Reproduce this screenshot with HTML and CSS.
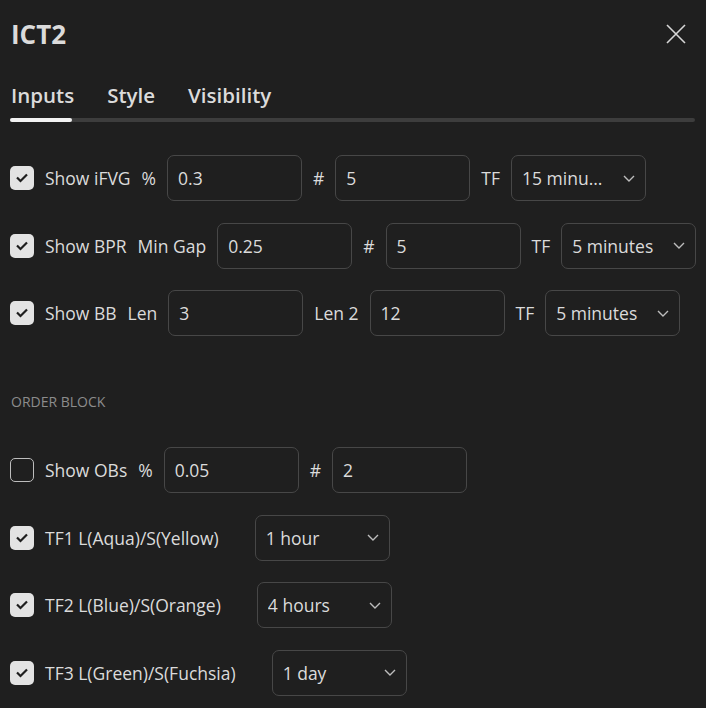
FILE: index.html
```html
<!DOCTYPE html>
<html lang="en">
<head>
	<meta charset="UTF-8">
	<title>ICT2</title>
	<link rel="stylesheet" href="styles.css">
</head>
<body>
	<div class="dialog">
		<div class="head">
			<h1 class="title">ICT2</h1>
			<button class="close" type="button">
				<svg width="20" height="20" viewBox="0 0 20 20"><path d="M1 1L19 19M19 1L1 19" stroke="#d6d6d6" stroke-width="1.6" fill="none"/></svg>
			</button>
		</div>

		<div class="tabs">
			<div class="tab-list">
				<span class="tab">Inputs</span>
				<span class="tab">Style</span>
				<span class="tab">Visibility</span>
			</div>
			<div class="tab-track"><div class="tab-thumb"></div></div>
		</div>

		<div class="body">
			<div class="row">
				<label class="check"><span class="box"><svg width="24" height="24" viewBox="0 0 24 24"><path d="M7 11.5L10.5 15L17 8.5" stroke="#1e1e1e" stroke-width="2.2" fill="none"/></svg></span><span class="label">Show iFVG</span></label>
				<span class="label">%</span>
				<div class="field">0.3</div>
				<span class="label">#</span>
				<div class="field">5</div>
				<span class="label">TF</span>
				<div class="field select"><span class="value">15 minutes</span><svg width="12" height="7" viewBox="0 0 12 7"><path d="M1 1L6 6L11 1" stroke="#bdbdbd" stroke-width="1.4" fill="none"/></svg></div>
			</div>

			<div class="row">
				<label class="check"><span class="box"><svg width="24" height="24" viewBox="0 0 24 24"><path d="M7 11.5L10.5 15L17 8.5" stroke="#1e1e1e" stroke-width="2.2" fill="none"/></svg></span><span class="label">Show BPR</span></label>
				<span class="label">Min Gap</span>
				<div class="field">0.25</div>
				<span class="label">#</span>
				<div class="field">5</div>
				<span class="label">TF</span>
				<div class="field select"><span class="value">5 minutes</span><svg width="12" height="7" viewBox="0 0 12 7"><path d="M1 1L6 6L11 1" stroke="#bdbdbd" stroke-width="1.4" fill="none"/></svg></div>
			</div>

			<div class="row">
				<label class="check"><span class="box"><svg width="24" height="24" viewBox="0 0 24 24"><path d="M7 11.5L10.5 15L17 8.5" stroke="#1e1e1e" stroke-width="2.2" fill="none"/></svg></span><span class="label">Show BB</span></label>
				<span class="label">Len</span>
				<div class="field">3</div>
				<span class="label">Len 2</span>
				<div class="field">12</div>
				<span class="label">TF</span>
				<div class="field select"><span class="value">5 minutes</span><svg width="12" height="7" viewBox="0 0 12 7"><path d="M1 1L6 6L11 1" stroke="#bdbdbd" stroke-width="1.4" fill="none"/></svg></div>
			</div>

			<div class="section">Order Block</div>

			<div class="row">
				<label class="check"><span class="box off"></span><span class="label">Show OBs</span></label>
				<span class="label">%</span>
				<div class="field">0.05</div>
				<span class="label">#</span>
				<div class="field">2</div>
			</div>

			<div class="row wide">
				<label class="check"><span class="box"><svg width="24" height="24" viewBox="0 0 24 24"><path d="M7 11.5L10.5 15L17 8.5" stroke="#1e1e1e" stroke-width="2.2" fill="none"/></svg></span><span class="label">TF1 L(Aqua)/S(Yellow)</span></label>
				<div class="field select"><span class="value">1 hour</span><svg width="12" height="7" viewBox="0 0 12 7"><path d="M1 1L6 6L11 1" stroke="#bdbdbd" stroke-width="1.4" fill="none"/></svg></div>
			</div>

			<div class="row wide">
				<label class="check"><span class="box"><svg width="24" height="24" viewBox="0 0 24 24"><path d="M7 11.5L10.5 15L17 8.5" stroke="#1e1e1e" stroke-width="2.2" fill="none"/></svg></span><span class="label">TF2 L(Blue)/S(Orange)</span></label>
				<div class="field select"><span class="value">4 hours</span><svg width="12" height="7" viewBox="0 0 12 7"><path d="M1 1L6 6L11 1" stroke="#bdbdbd" stroke-width="1.4" fill="none"/></svg></div>
			</div>

			<div class="row wide">
				<label class="check"><span class="box"><svg width="24" height="24" viewBox="0 0 24 24"><path d="M7 11.5L10.5 15L17 8.5" stroke="#1e1e1e" stroke-width="2.2" fill="none"/></svg></span><span class="label">TF3 L(Green)/S(Fuchsia)</span></label>
				<div class="field select"><span class="value">1 day</span><svg width="12" height="7" viewBox="0 0 12 7"><path d="M1 1L6 6L11 1" stroke="#bdbdbd" stroke-width="1.4" fill="none"/></svg></div>
			</div>
		</div>
	</div>
</body>
</html>
```

FILE: styles.css
```css
* {
	margin: 0;
	padding: 0;
	box-sizing: border-box;
}
body {
	width: 706px;
	height: 708px;
	overflow: hidden;
	background-color: #1f1f1f;
	color: #dbdbdb;
	font-family: "Open Sans", "Noto Sans", sans-serif;
}
.dialog {
	padding: 0 10px;
}
.head {
	height: 68px;
	display: flex;
	align-items: center;
	justify-content: space-between;
}
.title {
	font-size: 26px;
	font-weight: 700;
	line-height: 32px;
	padding-left: 1px;
}
.close {
	width: 20px;
	height: 20px;
	margin-right: 10px;
	background: none;
	border: 0;
	display: flex;
	cursor: pointer;
}
.tabs {
	margin-top: 13px;
}
.tab-list {
	display: flex;
	gap: 33px;
	height: 28px;
	align-items: center;
	padding-left: 1px;
}
.tab {
	font-size: 20.5px;
	font-weight: 600;
	line-height: 28px;
}
.tab-track {
	width: 685px;
	height: 4px;
	margin-top: 9px;
	border-radius: 2px;
	background-color: #3d3d3d;
}
.tab-thumb {
	width: 62px;
	height: 4px;
	border-radius: 2px;
	background-color: #f2f2f2;
}
.body {
	padding-top: 33px;
}
.row {
	display: flex;
	align-items: center;
	gap: 11px;
	height: 46px;
	margin-bottom: 21.5px;
	font-size: 17.5px;
	font-weight: 500;
}
.row.wide {
	gap: 36px;
}
.check {
	display: flex;
	align-items: center;
	gap: 11px;
	cursor: pointer;
}
.box {
	width: 24px;
	height: 24px;
	border-radius: 5px;
	background-color: #e3e3e3;
	display: flex;
	flex: none;
}
.box.off {
	background: none;
	border: 1.5px solid #bdbdbd;
}
.label {
	white-space: nowrap;
}
.field {
	width: 135px;
	height: 46px;
	flex: none;
	padding: 0 10px;
	border: 1px solid #474747;
	border-radius: 7px;
	display: flex;
	align-items: center;
}
.select {
	justify-content: space-between;
	gap: 17px;
}
.select .value {
	flex: 1;
	min-width: 0;
	overflow: hidden;
	white-space: nowrap;
	text-overflow: ellipsis;
}
.select svg {
	flex: none;
}
.section {
	margin: 56px 0 35px;
	padding-left: 1px;
	font-size: 14px;
	line-height: 20px;
	color: #8c8c8c;
	text-transform: uppercase;
}
```
